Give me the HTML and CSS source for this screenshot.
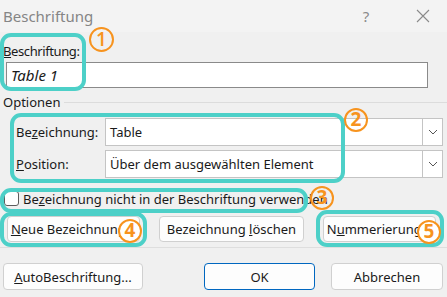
FILE: index.html
```html
<!DOCTYPE html>
<html lang="de">
<head>
  <meta charset="UTF-8" />
  <title>Beschriftung</title>
  <link rel="stylesheet" href="styles.css">
</head>
<body>
<div class="dialog">
  <div class="titlebar">
    <span class="title">Beschriftung</span>
    <span class="caption-btn">?</span>
    <span class="caption-btn">
      <svg width="14" height="14" viewBox="0 0 14 14"><path d="M1 1L13 13M13 1L1 13" stroke="#8a8a8a" stroke-width="1.1" fill="none"/></svg>
    </span>
  </div>

  <label class="caption-label"><u>B</u>eschriftung:</label>
  <div class="caption-input">Table 1</div>

  <div class="group-title">
    <span>Optionen</span>
    <span class="group-line"></span>
  </div>

  <div class="option-row first">
    <span class="option-label">Be<u>z</u>eichnung:</span>
    <div class="select">
      <span class="select-value">Table</span>
      <span class="select-arrow"><svg width="10" height="6" viewBox="0 0 10 6"><path d="M1 1L5 5L9 1" stroke="#555" stroke-width="1" fill="none"/></svg></span>
    </div>
  </div>
  <div class="option-row">
    <span class="option-label"><u>P</u>osition:</span>
    <div class="select">
      <span class="select-value">Über dem ausgewählten Element</span>
      <span class="select-arrow"><svg width="10" height="6" viewBox="0 0 10 6"><path d="M1 1L5 5L9 1" stroke="#555" stroke-width="1" fill="none"/></svg></span>
    </div>
  </div>

  <div class="check-row">
    <span class="checkbox"></span>
    <span>Be<u>z</u>eichnung nicht in der Beschriftung verwenden</span>
  </div>

  <div class="button-row">
    <button class="btn btn-new"><u>N</u>eue Bezeichnung...</button>
    <button class="btn btn-delete">Bezeichnung <u>l</u>öschen</button>
    <button class="btn btn-number">N<u>u</u>mmerierung...</button>
  </div>

  <div class="separator"></div>

  <div class="footer-row">
    <button class="btn btn-auto"><u>A</u>utoBeschriftung...</button>
    <button class="btn btn-ok">OK</button>
    <button class="btn btn-cancel">Abbrechen</button>
  </div>

  <!-- Markierungen -->
  <div class="mark mark-1"></div>
  <div class="mark mark-2"></div>
  <div class="mark mark-3"></div>
  <div class="mark mark-4"></div>
  <div class="mark mark-5"></div>
  <span class="num num-1">1</span>
  <span class="num num-2">2</span>
  <span class="num num-3">3</span>
  <span class="num num-4 filled">4</span>
  <span class="num num-5 filled">5</span>
</div>
</body>
</html>
```

FILE: styles.css
```css
body {
  margin: 0;
  font-family: "Noto Sans", "Open Sans", sans-serif;
  font-size: 13px;
  color: #1a1a1a;
}

.dialog {
  position: relative;
  width: 447px;
  height: 297px;
  background-color: #f0f0f0;
  overflow: hidden;
}

.titlebar {
  display: flex;
  align-items: center;
  height: 32px;
  padding-left: 3px;
  padding-right: 4px;
  background-color: #f3f3f3;
}

.title {
  flex: 1;
  font-size: 15px;
  color: #858585;
}

.caption-btn {
  width: 40px;
  margin-left: 17px;
  text-align: center;
  font-size: 15px;
  color: #8a8a8a;
  display: flex;
  justify-content: center;
}

.caption-label {
  display: block;
  margin-top: 11px;
  margin-left: 3px;
  line-height: 16px;
  letter-spacing: -0.4px;
}

.caption-input {
  box-sizing: border-box;
  width: 422px;
  height: 26px;
  margin-top: 3px;
  margin-left: 6px;
  padding-left: 4px;
  background-color: white;
  border: 1px solid #8a8a8a;
  font-size: 15px;
  font-style: italic;
  line-height: 24px;
}

.group-title {
  display: flex;
  align-items: center;
  margin-top: 6px;
  margin-left: 3px;
  line-height: 16px;
}

.group-line {
  flex: 1;
  height: 1px;
  margin-left: 4px;
  background-color: #dcdcdc;
}

.option-row {
  display: flex;
  align-items: center;
  height: 28px;
  margin-top: 4px;
  padding-left: 16px;
}

.option-row.first {
  margin-top: 8px;
}

.option-label {
  width: 89px;
}

.select {
  display: flex;
  width: 338px;
  height: 28px;
  box-sizing: border-box;
  background-color: white;
  border: 1px solid #c4c4c4;
}

.select-value {
  flex: 1;
  padding-left: 4px;
  line-height: 26px;
}

.select-arrow {
  width: 19px;
  display: flex;
  align-items: center;
  justify-content: center;
  border-left: 1px solid #c4c4c4;
}

.check-row {
  display: flex;
  align-items: center;
  height: 15px;
  margin-top: 13px;
  padding-left: 4px;
}

.checkbox {
  box-sizing: border-box;
  width: 15px;
  height: 15px;
  margin-right: 4px;
  background-color: white;
  border: 1px solid #5c5c5c;
  border-radius: 3px;
}

.button-row {
  display: flex;
  margin-top: 10px;
  padding-left: 7px;
  gap: 19px;
}

.btn {
  box-sizing: border-box;
  height: 26px;
  padding: 0;
  background-color: #fdfdfd;
  border: 1px solid #d0d0d0;
  border-radius: 4px;
  font-family: inherit;
  font-size: 13px;
  color: #1a1a1a;
}

.btn-new { width: 133px; }
.btn-delete { width: 145px; }
.btn-number { width: 113px; }

.separator {
  height: 1px;
  margin-top: 5px;
  background-color: #dedede;
}

.footer-row {
  display: flex;
  margin-top: 15px;
  padding-left: 3px;
}

.footer-row .btn {
  height: 27px;
}

.btn-auto { width: 140px; }
.btn-ok {
  width: 111px;
  margin-left: 61px;
  border-color: #0067c0;
}
.btn-cancel {
  width: 112px;
  margin-left: 16px;
}

/* Markierungen */
.mark {
  position: absolute;
  box-sizing: border-box;
  border: 4px solid #4dd0c8;
  border-radius: 11px;
}

.mark-1 { left: 0; top: 33px; width: 86px; height: 58px; }
.mark-2 { left: 10px; top: 113px; width: 335px; height: 70px; }
.mark-3 { left: 0; top: 188px; width: 308px; height: 25px; }
.mark-4 { left: 0; top: 212px; width: 147px; height: 35px; }
.mark-5 { left: 316px; top: 210px; width: 128px; height: 37px; }

.num {
  position: absolute;
  box-sizing: border-box;
  width: 24px;
  height: 24px;
  border: 2.5px solid #f7931e;
  border-radius: 50%;
  color: #f7931e;
  font-family: "Open Sans", sans-serif;
  font-size: 19px;
  font-weight: 700;
  line-height: 19px;
  text-align: center;
}

.num.filled {
  background-color: white;
}

.num-1 { left: 89px; top: 27px; width: 25px; height: 25px; font-weight: 600; line-height: 20px; }
.num-2 { left: 344px; top: 108px; }
.num-3 { left: 310px; top: 186px; }
.num-4 { left: 118px; top: 219px; }
.num-5 { left: 417px; top: 220px; }
```
